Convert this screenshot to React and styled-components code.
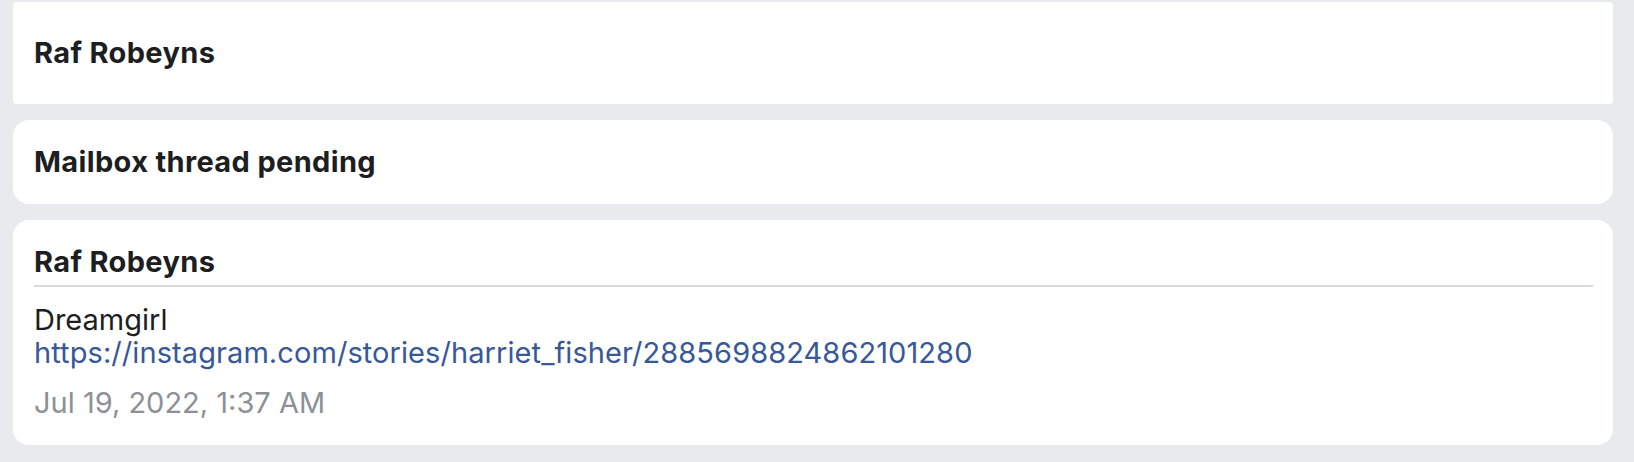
import React from 'react';
import styled, { createGlobalStyle } from 'styled-components';

const GlobalStyle = createGlobalStyle`
    html, body {
        margin: 0;
        padding: 0;
        background: #e9eaee;
    }
    body {
        font-family: Inter, "Noto Sans", sans-serif;
        color: #1c1e21;
    }
`;

const Feed = styled.div`
    display: flex;
    flex-direction: column;
    gap: 16px;
    padding: 2px 21px 16px 13px;
    background: #e9eaee;
`;

const Card = styled.div`
    background: #ffffff;
    border-radius: ${props => props.$flat ? '4px' : '16px'};
    padding: 0 21px;
    display: flex;
    flex-direction: column;
    justify-content: center;
    min-height: ${props => props.$tall ? '102px' : 'auto'};
    padding-top: ${props => props.$tall ? '0' : '25px'};
    padding-bottom: ${props => props.$tall ? '0' : '25px'};
`;

const Title = styled.div`
    font-size: 29px;
    font-weight: 700;
    line-height: 34px;
    letter-spacing: 0.35px;
    color: #1c1e21;
    ${props => props.$divided && `
        padding-bottom: 6px;
        border-bottom: 2px solid #dadbdf;
        margin-right: -1px;
    `}
`;

const Body = styled.div`
    padding-top: 16px;
    font-size: 29px;
    line-height: 33px;
`;

const Text = styled.div`
    color: #1c1e21;
`;

const Link = styled.a`
    color: #385898;
    text-decoration: none;
    letter-spacing: 0.08px;
`;

const Stamp = styled.div`
    margin-top: 17px;
    color: #8d9096;
    line-height: 34px;
`;

const App = () => {
    const url = 'https://instagram.com/stories/harriet_fisher/2885698824862101280';
    return (
        <>
            <GlobalStyle />
            <Feed>
                <Card $flat $tall>
                    <Title>Raf Robeyns</Title>
                </Card>
                <Card>
                    <Title>Mailbox thread pending</Title>
                </Card>
                <Card>
                    <Title $divided>Raf Robeyns</Title>
                    <Body>
                        <Text>Dreamgirl</Text>
                        <Link href={url}>{url}</Link>
                        <Stamp>Jul 19, 2022, 1:37 AM</Stamp>
                    </Body>
                </Card>
            </Feed>
        </>
    );
};

export default App;
